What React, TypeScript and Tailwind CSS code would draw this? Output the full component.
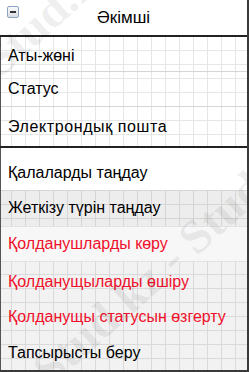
import React from 'react';

const attrs = ['Аты-жөні', 'Статус', 'Электрондық пошта'];

const methods: { label: string; red?: boolean; bg: string; h: string }[] = [
  { label: 'Қалаларды таңдау', bg: 'bg-white pt-[7px]', h: 'h-[42px]' },
  { label: 'Жеткізу түрін таңдау', bg: 'bg-black/[0.07]', h: 'h-[36px]' },
  { label: 'Қолданушларды көру', red: true, bg: 'bg-[#f7f7f7] border-y border-[#e2e2e2]', h: 'h-[36px]' },
  { label: 'Қолданущыларды өшіру', red: true, bg: 'bg-black/[0.05] pt-[3px]', h: 'h-[36px]' },
  { label: 'Қолданущы статусын өзгерту', red: true, bg: 'bg-black/[0.05] pt-[1px]', h: 'h-[36px]' },
  { label: 'Тапсырысты беру', bg: 'bg-black/[0.05] pt-[1px]', h: 'h-[36px]' },
];

const App: React.FC = () => {
  return (
    <div className="relative w-[249px] h-[372px] overflow-hidden flex flex-col bg-white bg-[linear-gradient(to_right,#e6e6e6_1px,transparent_1px),linear-gradient(to_bottom,#e6e6e6_1px,transparent_1px)] bg-[size:14px_14px] bg-[position:11px_8px] border-r-2 border-b-2 border-[#3a3a3a] font-['Liberation_Sans',Arial,sans-serif] text-black select-none">
      {/* header */}
      <div className="relative h-[35px] shrink-0 bg-white flex items-center justify-center">
        <div className="absolute left-[7px] top-[6px] w-[12px] h-[12px] rounded-[2px] border border-[#8aa4c4] bg-[linear-gradient(to_bottom,#fafafa,#d8dde4)] flex items-center justify-center">
          <div className="w-[6px] h-[2px] bg-[#333]" />
        </div>
        <span className="text-[17px] leading-none">Әкімші</span>
      </div>
      <div className="h-[2px] shrink-0 bg-[#222]" />

      {/* attributes */}
      <div className="flex flex-col shrink-0 border-l border-[#555]">
        {attrs.map((a, i) => (
          <div
            key={a}
            className={`flex items-center pl-[7px] text-[16px] ${i === 0 ? 'pt-[3px]' : ''} ${i === 2 ? 'h-[39px] tracking-[0.6px]' : 'h-[35px] border-b border-[#d6d6d6]'}`}
          >
            {a}
          </div>
        ))}
      </div>
      <div className="h-[2px] shrink-0 bg-[#222]" />

      {/* methods */}
      <div className="flex flex-col flex-1 border-l border-[#555]">
        {methods.map((m) => (
          <div
            key={m.label}
            className={`flex items-center pl-[7px] text-[16px] ${m.h} ${m.bg} ${m.red ? 'text-[#f0102a]' : 'text-black'}`}
          >
            {m.label}
          </div>
        ))}
      </div>

      {/* watermark */}
      <div className="pointer-events-none absolute inset-0">
        <div className="absolute left-[-10px] top-[30px] -rotate-[42deg] origin-left font-['Liberation_Serif',serif] font-bold text-[48px] text-black/[0.08] whitespace-nowrap">
          Stud.kz
        </div>
        <div className="absolute left-[40px] top-[340px] -rotate-[42deg] origin-left font-['Liberation_Serif',serif] font-bold text-[48px] text-black/[0.08] whitespace-nowrap">
          Stud.kz - Stud.kz
        </div>
      </div>
    </div>
  );
};

export default App;
